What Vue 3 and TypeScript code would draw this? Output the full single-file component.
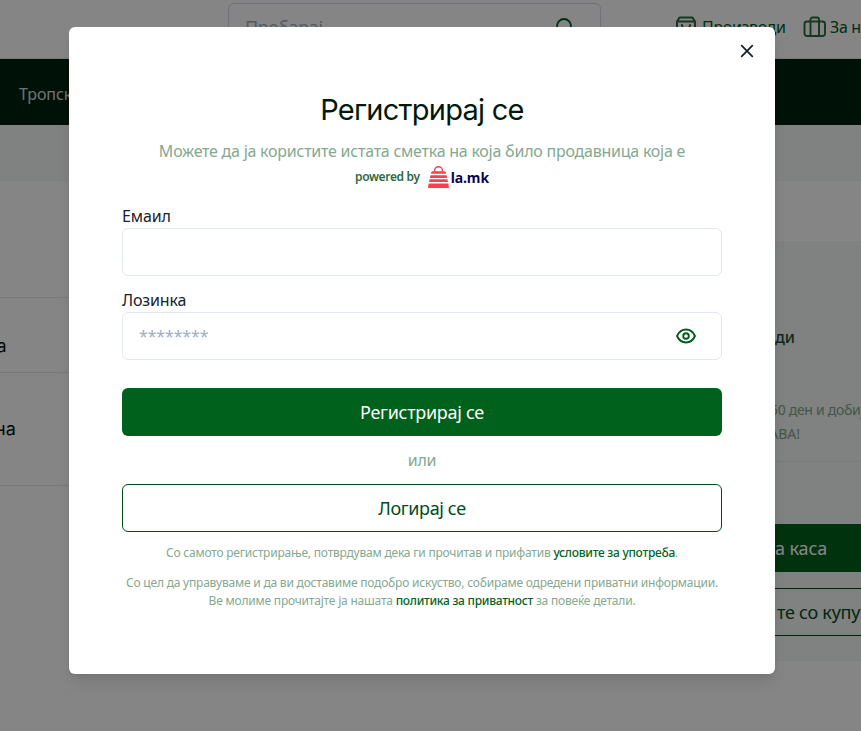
<script setup lang="ts">
import { ref } from 'vue'

const email = ref('')
const password = ref('')
const showPassword = ref(false)
</script>

<template>
  <div class="screen" lang="mk">
    <div class="shop">
      <header class="header">
        <div class="search">
          <span>Пребарај</span>
          <svg width="20" height="20" viewBox="0 0 20 20" fill="none" stroke="currentColor" stroke-width="1.8">
            <circle cx="9" cy="9" r="7" />
            <path d="M14 14l5 5" />
          </svg>
        </div>
        <div class="link products">
          <svg width="22" height="22" viewBox="0 0 22 22" fill="none" stroke="currentColor" stroke-width="2" stroke-linejoin="round" stroke-linecap="round">
            <path d="M2 5.500L4.500 1.500h13L20 5.500v12.500a2.500 2.500 0 0 1-2.500 2.500h-13A2.500 2.500 0 0 1 2 18zM2 5.500h18M7 9c.5 5 7.500 5 8 0" />
          </svg>
          <span>Производи</span>
        </div>
        <div class="link about">
          <svg width="24" height="22" viewBox="0 0 24 22" fill="none" stroke="currentColor" stroke-width="1.900" stroke-linejoin="round">
            <rect x="1.500" y="5.500" width="20.500" height="14.500" rx="2.500" />
            <path d="M7.500 20V3.500a2 2 0 0 1 2-2h4.500a2 2 0 0 1 2 2V20" />
          </svg>
          <span>За нас</span>
        </div>
      </header>
      <nav class="nav"><span>Тропски</span></nav>
      <div class="band"></div>
      <main class="content">
        <div class="items">
          <div class="item spacer"></div>
          <div class="item first">а</div>
          <div class="item second">на</div>
        </div>
        <aside class="summary">
          <div class="summary-title">Производи</div>
          <div class="note">
            <div class="note-a">50 ден и добиј</div>
            <div class="note-b">ДОСТАВА!</div>
          </div>
          <div class="cta filled"><span>На каса</span></div>
          <div class="cta outline"><span>те со купувачи</span></div>
        </aside>
      </main>
    </div>

    <div class="overlay">
      <section class="modal" role="dialog">
        <button class="close" type="button">
          <svg width="14" height="14" viewBox="0 0 14 14" fill="none" stroke="currentColor" stroke-width="1.800" stroke-linecap="round">
            <path d="M1.700 1.700l10.600 10.600M12.300 1.700L1.700 12.300" />
          </svg>
        </button>
        <h1>Регистрирај се</h1>
        <p class="subtitle">Можете да ја користите истата сметка на која било продавница која е</p>
        <div class="powered">
          <span class="by">powered by</span>
          <svg width="21" height="22" viewBox="0 0 21 22">
            <path d="M6.500 5.300V4.800a4 4 0 0 1 8 0v.5" fill="none" stroke="#f93f4c" stroke-width="1.500" />
            <path d="M4.600 5.200h11.800q1 0 1.300 1l.4 1.500H2.900l.4-1.500q.3-1 1.300-1zM2.500 9.200h16l.7 2.700H1.800zM1.600 13.300h17.800l.6 2.700H1zM.6 17.400h19.800L21 22H0z" fill="#f93f4c" />
          </svg>
          <span class="brand">la.mk</span>
        </div>
        <form @submit.prevent>
          <label for="email">Емаил</label>
          <div class="field"><input id="email" v-model="email" type="text" /></div>
          <label for="password">Лозинка</label>
          <div class="field">
            <input id="password" v-model="password" :type="showPassword ? 'text' : 'password'" placeholder="********" />
            <button class="eye" type="button" @click="showPassword = !showPassword">
              <svg width="22" height="18" viewBox="0 0 22 18" fill="none" stroke="currentColor" stroke-width="1.900">
                <path d="M2 9c2-4.300 5.200-6.500 9-6.500s7 2.200 9 6.500c-2 4.300-5.200 6.500-9 6.500S4 13.300 2 9z" stroke-linejoin="round" />
                <circle cx="11" cy="9" r="2.800" />
              </svg>
            </button>
          </div>
          <button class="btn primary" type="submit">Регистрирај се</button>
          <div class="or">или</div>
          <button class="btn secondary" type="button">Логирај се</button>
        </form>
        <p class="legal terms">Со самото регистрирање, потврдувам дека ги прочитав и прифатив <a>условите за употреба</a>.</p>
        <p class="legal privacy">
          Со цел да управуваме и да ви доставиме подобро искуство, собираме одредени приватни информации.<br />
          Ве молиме прочитајте ја нашата <a>политика за приватност</a> за повеќе детали.
        </p>
      </section>
    </div>
  </div>
</template>

<style>
body { margin: 0; overflow: hidden; }
</style>

<style scoped>
* { box-sizing: border-box; }
.screen { position: relative; width: 861px; height: 731px; overflow: hidden; font-family: "Noto Sans", sans-serif; font-size: 16px; line-height: 24px; white-space: nowrap; color: #1a202c; }
.shop { height: 731px; background: #fff; overflow: hidden; }
.header { display: flex; align-items: center; height: 59px; padding: 0 0 5px 228px; border-bottom: 1px solid #e2e8f0; color: #005a1e; }
.search { display: flex; align-items: center; justify-content: space-between; flex: none; width: 373px; height: 48px; padding: 0 25px 0 16px; border: 1px solid #d3dae6; border-radius: 6px; color: #a0aec0; font-size: 18px; letter-spacing: -0.35px; }
.search svg { color: #005a1e; }
.link { display: flex; align-items: center; flex: none; font-weight: 450; letter-spacing: -0.35px; }
.link svg { color: #2d6a43; }
.products { margin-left: 74px; gap: 5px; width: 128px; }
.about { gap: 3px; }
.nav { height: 66px; padding: 23px 0 0 19px; background: #002410; color: #d5ddd8; letter-spacing: -0.1px; }
.band { height: 56px; background: #f4f9f6; }
.content { display: flex; justify-content: space-between; }
.items { width: 600px; font-family: Inter, sans-serif; font-size: 18px; color: #00190b; }
.item { border-bottom: 1px solid #e6e9e8; }
.spacer { height: 117px; }
.first { height: 75px; padding: 36px 0 0 0; text-indent: -3.5px; }
.second { height: 113px; padding: 44px 0 0 0; text-indent: -5px; }
.summary { width: 161px; height: 420px; margin-top: 60px; padding-top: 84px; background: #f4f9f6; overflow: hidden; }
.summary-title { display: flex; justify-content: flex-end; width: 95px; font-weight: 500; color: #1f4f31; }
.note { height: 112px; padding-top: 48px; margin-top: 1px; border-bottom: 1px solid #e2e8f0; font-size: 14px; color: #83a48e; }
.note-a { padding-left: 70px; letter-spacing: -0.3px; }
.note-b { display: flex; justify-content: flex-end; width: 100px; }
.cta { height: 48px; font-size: 18px; line-height: 48px; letter-spacing: -0.15px; }
.filled { margin-top: 62px; background: #00611c; color: #fff; }
.filled span { display: block; width: 127px; text-align: right; }
.outline { margin-top: 16px; padding-left: 77px; line-height: 46px; border: 1px solid #004c1a; border-width: 1px 0; color: #004c1a; font-weight: 450; letter-spacing: -0.25px; }
.overlay { position: absolute; inset: 0; padding: 27px 86px 0 69px; background: rgba(0, 0, 0, 0.48); }
.modal { position: relative; height: 647px; padding: 64px 53px 0; border-radius: 6px; background: #fff; box-shadow: 0 10px 15px -3px rgba(0, 0, 0, 0.1), 0 4px 6px -2px rgba(0, 0, 0, 0.05); text-align: center; }
.close { position: absolute; top: 17px; right: 21px; width: 14px; height: 14px; padding: 0; border: 0; background: none; color: #1a202c; }
button { font: inherit; }
svg { display: block; flex: none; }
h1 { margin: 0; font: 400 29px/38px Inter, sans-serif; letter-spacing: -0.74px; color: #00190b; }
p { margin: 0; }
.subtitle { margin-top: 10px; letter-spacing: -0.24px; color: #83a990; }
.powered { display: flex; justify-content: center; align-items: center; height: 24px; margin-top: 2px; }
.by { margin-right: 8px; font-size: 12px; font-weight: 600; letter-spacing: -0.35px; color: #2d6a43; }
.brand { margin: 1px 0 0 2px; font-size: 14px; font-weight: 700; letter-spacing: -0.1px; color: #0b0650; }
form { margin-top: 15px; text-align: left; }
label { display: block; height: 24px; letter-spacing: -0.15px; }
.field { display: flex; align-items: center; height: 48px; margin-bottom: 12px; border: 1px solid #e2e8f0; border-radius: 6px; }
input { flex: 1; min-width: 0; height: 46px; padding: 0 16px; border: 0; outline: 0; background: none; font: 16px "Noto Sans", sans-serif; letter-spacing: -0.15px; }
input::placeholder { color: #a0aec0; opacity: 1; }
.eye { margin-right: 24px; padding: 0; border: 0; background: none; color: #005a1e; }
.btn { display: block; width: 100%; height: 48px; padding: 0; border-radius: 6px; font-size: 18px; letter-spacing: -0.28px; }
.primary { margin-top: 28px; border: 0; background: #00611c; color: #fff; }
.or { height: 48px; line-height: 49px; text-align: center; letter-spacing: -0.2px; color: #83a990; }
.secondary { border: 1px solid #004c1a; background: #fff; color: #004c1a; font-weight: 450; letter-spacing: -0.38px; }
.legal { font-size: 12px; line-height: 18px; letter-spacing: -0.21px; color: #83a990; }
.terms { margin-top: 12px; }
.privacy { margin-top: 12px; }
a { font-weight: 500; letter-spacing: -0.27px; color: #00661e; }
</style>
